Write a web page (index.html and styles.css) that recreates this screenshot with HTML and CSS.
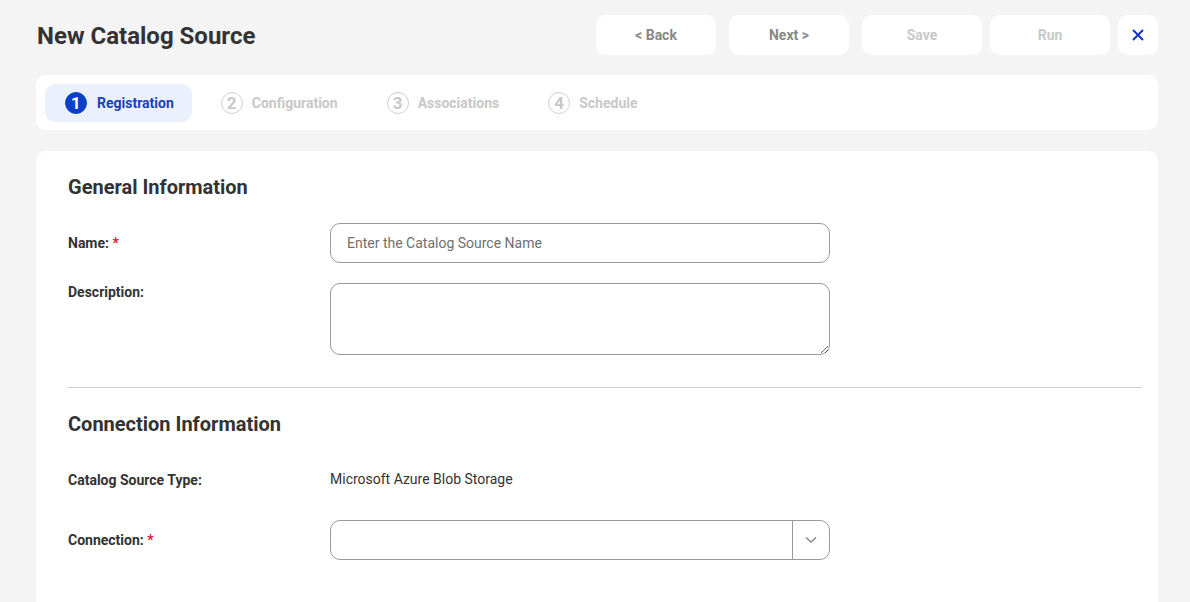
FILE: index.html
```html
<!DOCTYPE html>
<html lang="en">
<head>
    <meta charset="UTF-8">
    <meta name="viewport" content="width=device-width, initial-scale=1.0">
    <title>New Catalog Source</title>
    <link rel="stylesheet" href="styles.css">
</head>
<body>
    <div class="page">
        <header class="page-header">
            <h1>New Catalog Source</h1>
            <div class="actions">
                <button class="btn">&lt; Back</button>
                <button class="btn">Next &gt;</button>
                <button class="btn disabled">Save</button>
                <button class="btn disabled">Run</button>
                <button class="btn close" aria-label="Close">
                    <svg width="12" height="12" viewBox="0 0 12 12"><path d="M1 1L11 11M11 1L1 11" stroke="#1237c4" stroke-width="2" fill="none"/></svg>
                </button>
            </div>
        </header>

        <nav class="stepper">
            <div class="step active"><span class="step-num">1</span>Registration</div>
            <div class="step"><span class="step-num">2</span>Configuration</div>
            <div class="step"><span class="step-num">3</span>Associations</div>
            <div class="step"><span class="step-num">4</span>Schedule</div>
        </nav>

        <main class="card">
            <h2>General Information</h2>
            <div class="field">
                <label for="name">Name: <span class="req">*</span></label>
                <input type="text" id="name" placeholder="Enter the Catalog Source Name">
            </div>
            <div class="field top">
                <label for="desc">Description:</label>
                <textarea id="desc"></textarea>
            </div>

            <hr class="divider">

            <h2>Connection Information</h2>
            <div class="field static">
                <label>Catalog Source Type:</label>
                <span class="value">Microsoft Azure Blob Storage</span>
            </div>
            <div class="field">
                <label>Connection: <span class="req">*</span></label>
                <div class="select">
                    <span class="select-value"></span>
                    <span class="select-arrow">
                        <svg width="12" height="8" viewBox="0 0 12 8"><path d="M1 1.5L6 6L11 1.5" stroke="#8a8a8a" stroke-width="1.6" fill="none"/></svg>
                    </span>
                </div>
            </div>
        </main>
    </div>
</body>
</html>
```

FILE: styles.css
```css
* {
    box-sizing: border-box;
}
body {
    margin: 0;
    background: #f4f4f4;
    font-family: Roboto, "Liberation Sans", sans-serif;
    color: #333;
    overflow: hidden;
}
.page {
    padding: 15px 32px 0 36px;
}
.page-header {
    display: flex;
    align-items: center;
    justify-content: space-between;
    height: 40px;
}
.page-header h1 {
    margin: 2px 0 0 1px;
    font-size: 24px;
    font-weight: 700;
    color: #333;
}
.actions {
    display: flex;
    gap: 13px;
}
.btn {
    width: 120px;
    height: 40px;
    border: none;
    border-radius: 10px;
    background: #fff;
    font-family: inherit;
    font-size: 14px;
    font-weight: 700;
    color: #888;
    cursor: pointer;
}
.btn.disabled {
    color: #c8c8c8;
}
.btn.disabled + .btn.disabled,
.btn.close {
    margin-left: -5px;
}
.btn.close {
    width: 40px;
    display: flex;
    align-items: center;
    justify-content: center;
}
.stepper {
    margin-top: 20px;
    height: 55px;
    background: #fff;
    border-radius: 10px;
    padding: 9px;
    display: flex;
    gap: 9px;
}
.step {
    display: flex;
    align-items: center;
    gap: 9px;
    padding: 0 20px;
    height: 38px;
    border-radius: 10px;
    font-size: 14px;
    font-weight: 700;
    color: #c8c8c8;
}
.step-num {
    width: 22px;
    height: 22px;
    border-radius: 50%;
    border: 1.5px solid #d0d0d0;
    display: flex;
    align-items: center;
    justify-content: center;
    font-size: 17px;
    font-weight: 700;
    color: #c8c8c8;
}
.step.active {
    gap: 10px;
    padding-right: 18px;
    background: #eaf1fd;
    color: #1a3fb8;
}
.step.active .step-num {
    background: #0b40c6;
    border-color: #0b40c6;
    color: #fff;
}
.card {
    margin-top: 21px;
    background: #fff;
    border-radius: 10px 10px 0 0;
    padding: 24px 16px 60px 32px;
    min-height: 460px;
}
.card h2 {
    margin: 0 0 24px;
    font-size: 20px;
    line-height: 24px;
    font-weight: 700;
    color: #333;
}
.field {
    display: grid;
    grid-template-columns: 262px 500px;
    align-items: center;
    margin-bottom: 20px;
}
.field.top {
    align-items: start;
}
.field.top label {
    padding-top: 1px;
}
.field.static {
    height: 40px;
}
.field label {
    font-size: 14px;
    font-weight: 700;
    color: #333;
}
.req {
    color: #e0143c;
}
.field input,
.field textarea {
    font-family: inherit;
    font-size: 14px;
    border: 1px solid #999;
    border-radius: 10px;
    padding: 0 16px;
    color: #333;
    outline: none;
}
.field input {
    height: 40px;
}
.field input::placeholder {
    color: #707070;
}
.field textarea {
    height: 72px;
    resize: vertical;
    padding-top: 10px;
}
.value {
    font-size: 14px;
    color: #333;
    margin-top: -3px;
}
.divider {
    border: none;
    border-top: 1px solid #ccc;
    margin: 32px 0 24px;
}
.select {
    display: flex;
    height: 40px;
    border: 1px solid #999;
    border-radius: 10px;
}
.select-value {
    flex: 1;
}
.select-arrow {
    width: 37px;
    border-left: 1px solid #999;
    display: flex;
    align-items: center;
    justify-content: center;
}
```
